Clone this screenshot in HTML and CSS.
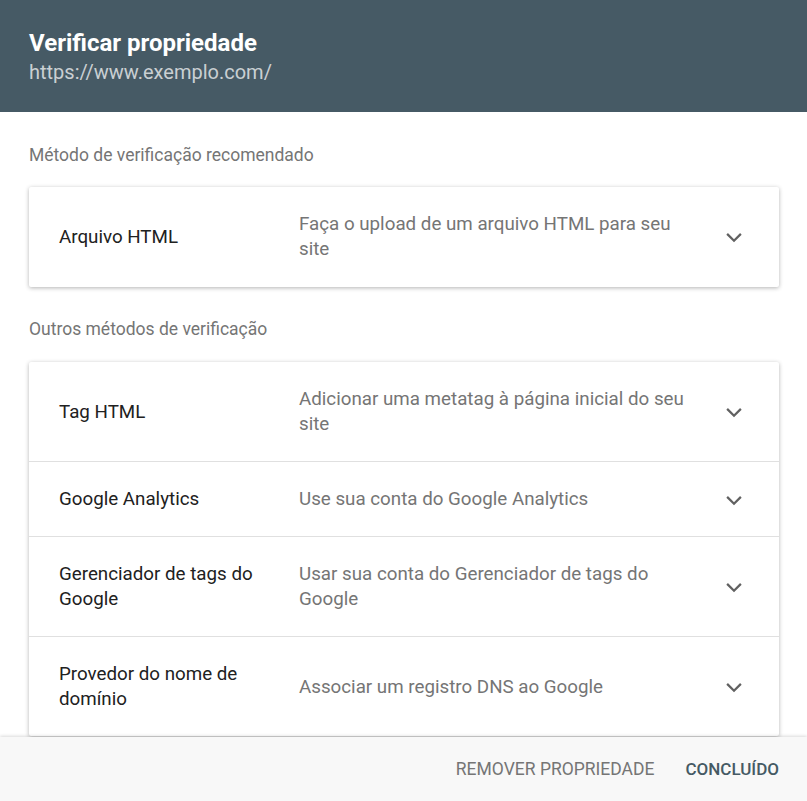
FILE: index.html
```html
<!DOCTYPE html>
<html lang="pt-BR">
<head>
  <meta charset="UTF-8" />
  <meta name="viewport" content="width=device-width, initial-scale=1.0" />
  <title>Verificar propriedade</title>
  <link rel="stylesheet" href="styles.css">
</head>
<body>
  <div class="dialog">
    <header class="dialog-header">
      <h1>Verificar propriedade</h1>
      <p class="site-url">https://www.exemplo.com/</p>
    </header>

    <main class="dialog-body">
      <p class="section-label">Método de verificação recomendado</p>
      <div class="card">
        <div class="method">
          <div class="method-name">Arquivo HTML</div>
          <div class="method-desc">Faça o upload de um arquivo HTML para seu site</div>
          <svg class="chevron" viewBox="0 0 24 24"><polyline points="6.5,9.5 12,15 17.5,9.5"/></svg>
        </div>
      </div>

      <p class="section-label">Outros métodos de verificação</p>
      <div class="card">
        <div class="method">
          <div class="method-name">Tag HTML</div>
          <div class="method-desc">Adicionar uma metatag à página inicial do seu site</div>
          <svg class="chevron" viewBox="0 0 24 24"><polyline points="6.5,9.5 12,15 17.5,9.5"/></svg>
        </div>
        <div class="method">
          <div class="method-name">Google Analytics</div>
          <div class="method-desc">Use sua conta do Google Analytics</div>
          <svg class="chevron" viewBox="0 0 24 24"><polyline points="6.5,9.5 12,15 17.5,9.5"/></svg>
        </div>
        <div class="method">
          <div class="method-name">Gerenciador de tags do Google</div>
          <div class="method-desc">Usar sua conta do Gerenciador de tags do Google</div>
          <svg class="chevron" viewBox="0 0 24 24"><polyline points="6.5,9.5 12,15 17.5,9.5"/></svg>
        </div>
        <div class="method">
          <div class="method-name">Provedor do nome de domínio</div>
          <div class="method-desc">Associar um registro DNS ao Google</div>
          <svg class="chevron" viewBox="0 0 24 24"><polyline points="6.5,9.5 12,15 17.5,9.5"/></svg>
        </div>
      </div>
    </main>

    <footer class="dialog-footer">
      <button class="btn btn-remove">Remover propriedade</button>
      <button class="btn btn-done">Concluído</button>
    </footer>
  </div>
</body>
</html>
```

FILE: styles.css
```css
* {
  box-sizing: border-box;
}

html, body {
  margin: 0;
  height: 100%;
}

body {
  font-family: Roboto, "Liberation Sans", Arial, sans-serif;
  background: white;
}

.dialog {
  display: flex;
  flex-direction: column;
  height: 100vh;
}

.dialog-header {
  background: #465a65;
  height: 112px;
  padding: 28px 29px 0;
  flex-shrink: 0;
}

.dialog-header h1 {
  margin: 0;
  color: white;
  font-size: 24px;
  font-weight: 700;
  line-height: 30px;
}

.site-url {
  margin: 0;
  color: rgba(255, 255, 255, 0.72);
  font-size: 20px;
  line-height: 28px;
}

.dialog-body {
  flex: 1;
  overflow: hidden;
  padding: 33px 28px 0 29px;
}

.section-label {
  margin: 0 0 22px;
  color: #757575;
  font-size: 17.5px;
  line-height: 20px;
}

.card {
  background: white;
  border-radius: 2px;
  box-shadow: 0 1px 4px rgba(0, 0, 0, 0.3);
  margin-bottom: 32px;
}

.card + .section-label {
  margin-bottom: 23px;
}

.method {
  display: flex;
  align-items: center;
  padding: 25px 30px 24px;
  border-top: 1px solid #e0e0e0;
  font-size: 18.75px;
  line-height: 25px;
}

.method:first-child {
  border-top: none;
  padding-top: 25px;
}

.card:first-of-type .method {
  padding-bottom: 25px;
}

.method-name {
  width: 210px;
  margin-right: 30px;
  color: #212121;
}

.method-desc {
  width: 396px;
  color: #757575;
}

.chevron {
  width: 30px;
  height: 30px;
  margin: -3px 0 -3px auto;
  fill: none;
  stroke: #616161;
  stroke-width: 1.8;
}

.dialog-footer {
  flex-shrink: 0;
  height: 64px;
  background: #f8f8f8;
  box-shadow: 0 -1px 3px rgba(0, 0, 0, 0.15);
  display: flex;
  justify-content: flex-end;
  align-items: center;
  gap: 31px;
  padding: 0 28px;
  position: relative;
}

.btn {
  background: none;
  border: none;
  padding: 0;
  font-family: inherit;
  font-size: 17.5px;
  font-weight: 400;
  text-transform: uppercase;
  cursor: pointer;
}

.btn-remove {
  color: #757575;
}

.btn-done {
  color: #455a64;
  font-size: 17px;
  font-weight: 500;
}
```
